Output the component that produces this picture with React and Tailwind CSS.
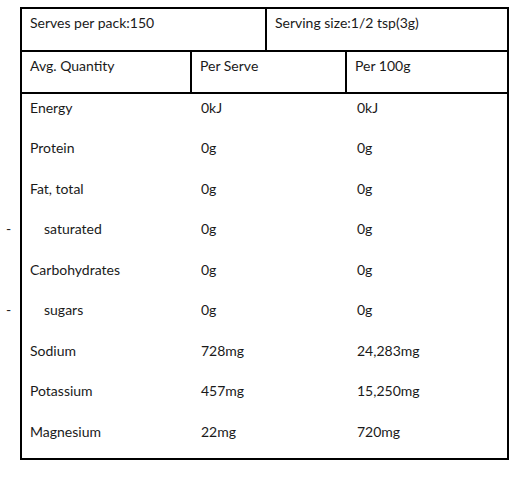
import React from "react";

const rows = [
  { label: "Energy", a: "0kJ", b: "0kJ" },
  { label: "Protein", a: "0g", b: "0g" },
  { label: "Fat, total", a: "0g", b: "0g" },
  { label: "saturated", a: "0g", b: "0g", sub: true },
  { label: "Carbohydrates", a: "0g", b: "0g" },
  { label: "sugars", a: "0g", b: "0g", sub: true },
  { label: "Sodium", a: "728mg", b: "24,283mg" },
  { label: "Potassium", a: "457mg", b: "15,250mg" },
  { label: "Magnesium", a: "22mg", b: "720mg" },
];

export default function App() {
  return (
    <div
      className="w-[532px] h-[483px] bg-white pt-[7px] pl-[20px] text-[14px] leading-[20px] text-[#1a1a1a]"
      style={{ fontFamily: "Lato, 'Open Sans', sans-serif" }}
    >
      <div className="w-[489px] border-2 border-black">
        <div className="flex h-[43px] border-b-2 border-black">
          <div className="w-[245px] border-r-2 border-black pl-[8px] pt-[4px]">Serves per pack:150</div>
          <div className="flex-1 pl-[8px] pt-[4px]">Serving size:1/2 tsp(3g)</div>
        </div>
        <div className="flex h-[42px] border-b-2 border-black">
          <div className="w-[170px] border-r-2 border-black pl-[8px] pt-[4px]">Avg. Quantity</div>
          <div className="w-[155px] border-r-2 border-black pl-[8px] pt-[4px]">Per Serve</div>
          <div className="flex-1 pl-[8px] pt-[4px]">Per 100g</div>
        </div>
        <div className="flex flex-col">
          {rows.map((r) => (
            <div key={r.label} className="relative flex h-[40.44px] pt-[4px]">
              {r.sub && (
                <span className="absolute left-[-16px] top-[4px]">-</span>
              )}
              <div className={"w-[172px] " + (r.sub ? "pl-[22px]" : "pl-[8px]")}>{r.label}</div>
              <div className="w-[155px] pl-[7px]">{r.a}</div>
              <div className="flex-1 pl-[8px]">{r.b}</div>
            </div>
          ))}
        </div>
      </div>
    </div>
  );
}
